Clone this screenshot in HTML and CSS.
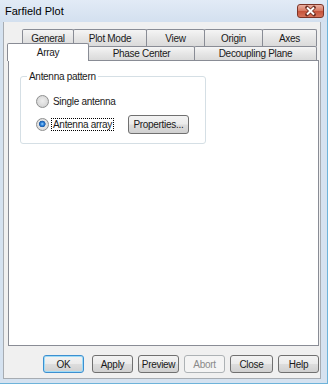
FILE: index.html
```html
<!DOCTYPE html>
<html lang="en">
<head>
  <meta charset="UTF-8">
  <title>Farfield Plot</title>
  <link rel="stylesheet" href="styles.css">
</head>
<body>
  <div class="window">
    <div class="titlebar">
      <span class="title">Farfield Plot</span>
      <span class="close-btn">
        <svg width="25" height="12" viewBox="0 0 25 12">
          <path d="M9 2.5 L16 9.5 M16 2.5 L9 9.5" stroke="#6b2a1f" stroke-width="3.6" stroke-linecap="round"/>
          <path d="M9 2.5 L16 9.5 M16 2.5 L9 9.5" stroke="#fff" stroke-width="2"/>
        </svg>
      </span>
    </div>

    <div class="client">
      <!-- onglets sur deux rangees -->
      <div class="tabs">
        <div class="tab-row row-back">
          <div class="tab t-general">General</div>
          <div class="tab t-plotmode">Plot Mode</div>
          <div class="tab t-view">View</div>
          <div class="tab t-origin">Origin</div>
          <div class="tab t-axes">Axes</div>
        </div>
        <div class="tab-row row-front">
          <div class="tab active t-array">Array</div>
          <div class="tab t-phase">Phase Center</div>
          <div class="tab t-decoupling">Decoupling Plane</div>
        </div>
      </div>

      <div class="panel">
        <fieldset class="group">
          <legend>Antenna pattern</legend>
          <div class="option">
            <span class="radio"></span>
            <span class="label">Single antenna</span>
          </div>
          <div class="option">
            <span class="radio checked"></span>
            <span class="label focus">Antenna array</span>
            <button class="btn btn-props">Properties...</button>
          </div>
        </fieldset>
      </div>

      <div class="buttons">
        <button class="btn default">OK</button>
        <button class="btn">Apply</button>
        <button class="btn">Preview</button>
        <button class="btn" disabled>Abort</button>
        <button class="btn wide">Close</button>
        <button class="btn">Help</button>
      </div>
    </div>
  </div>
</body>
</html>
```

FILE: styles.css
```css
* {
  box-sizing: border-box;
}
body {
  margin: 0;
  font-family: "Liberation Sans", Arial, sans-serif;
  font-size: 10px;
  letter-spacing: -0.3px;
  color: #1a1a1a;
  background: #d3e1f0;
}
.window {
  width: 328px;
  height: 384px;
  display: flex;
  flex-direction: column;
  background: #d5e2f0;
  border-right: 1px solid #6db3da;
  border-bottom: 1px solid #6db3da;
}
.titlebar {
  height: 22px;
  flex: none;
  display: flex;
  align-items: center;
  justify-content: space-between;
  padding: 0 3px 0 5px;
  background: linear-gradient(#e2ebf6, #d3e0ef);
}
.title {
  font-size: 11px;
  letter-spacing: 0;
  color: #000;
}
.close-btn {
  width: 27px;
  height: 14px;
  border: 1px solid #7d3427;
  border-radius: 3px;
  background: linear-gradient(#eab1a3 0%, #d87a63 48%, #c5523a 52%, #d6735a 100%);
  display: flex;
}
.client {
  flex: 1;
  margin: 0 6px 4px 3px;
  background: #f0f0f0;
  border: 1px solid #a7acb2;
  border-top: none;
  padding: 7px 1px 5px 4px;
  display: flex;
  flex-direction: column;
}

/* tabs */
.tab-row {
  display: flex;
  align-items: flex-start;
}
.row-back {
  height: 17px;
  margin-left: 14px;
}
.row-front {
  height: 14px;
}
.tab {
  height: 100%;
  border: 1px solid #898c95;
  border-bottom: none;
  border-radius: 2px 2px 0 0;
  background: linear-gradient(#f5f5f5, #e6e6e6 50%, #dadada);
  display: flex;
  align-items: center;
  justify-content: center;
  margin-left: -1px;
}
.tab:first-child {
  margin-left: 0;
}
.tab.active {
  position: relative;
  z-index: 1;
  height: 18px;
  margin-top: -3px;
  margin-left: -1px;
  background: #fff;
  padding-bottom: 1px;
}
.t-general { width: 52px; }
.t-plotmode { width: 74px; }
.t-view { width: 59px; }
.t-origin { width: 59px; }
.t-axes { width: 55px; }
.t-array { width: 82px; }
.t-phase { width: 107px; }
.t-decoupling { width: 123px; }

.panel {
  height: 286px;
  background: #fff;
  border: 1px solid #898c95;
  padding: 9px 0 0 11px;
}
.group {
  width: 186px;
  margin: 0;
  padding: 0 0 9px 15px;
  border: 1px solid #d5dfe5;
  border-radius: 3px;
}
.group legend {
  margin-left: -9px;
  padding: 0 2px;
  line-height: 13px;
}
.option {
  height: 20px;
  display: flex;
  align-items: center;
  margin-top: 3px;
}
.option:first-of-type {
  margin-top: 8px;
}
.radio {
  width: 13px;
  height: 13px;
  border-radius: 50%;
  border: 1px solid #8e8f8f;
  background: radial-gradient(circle at 50% 45%, #eeeeee 0, #dcdcdc 55%, #c8c8c8 100%);
  margin-right: 2px;
}
.radio.checked {
  background: radial-gradient(circle at 48% 45%, #9fd6ff 0, #2f84dc 1.6px, #1b5aa6 3px, #e4e4e4 3.6px, #d2d2d2 100%);
}
.label {
  padding: 0 1px;
  border: 1px dotted transparent;
}
.label.focus {
  border-color: #000;
}

/* buttons */
.btn {
  width: 41px;
  height: 18px;
  padding: 0;
  font: inherit;
  letter-spacing: inherit;
  color: #1a1a1a;
  border: 1px solid #707070;
  border-radius: 3px;
  background: linear-gradient(#f3f3f3 0%, #ebebeb 48%, #dddddd 52%, #d0d0d0 100%);
}
.btn.wide {
  width: 43px;
}
.btn.default {
  border-color: #3c8fd0;
  box-shadow: inset 0 0 0 1px #9fdcf7;
  margin-right: 3px;
}
.btn:disabled {
  border-color: #adb2b5;
  background: #f4f4f4;
  color: #8a8a8a;
}
.btn-props {
  width: 61px;
  height: 19px;
  margin-left: 14px;
}
.buttons {
  margin-top: 9px;
  display: flex;
  justify-content: flex-end;
  gap: 5px;
}
```
